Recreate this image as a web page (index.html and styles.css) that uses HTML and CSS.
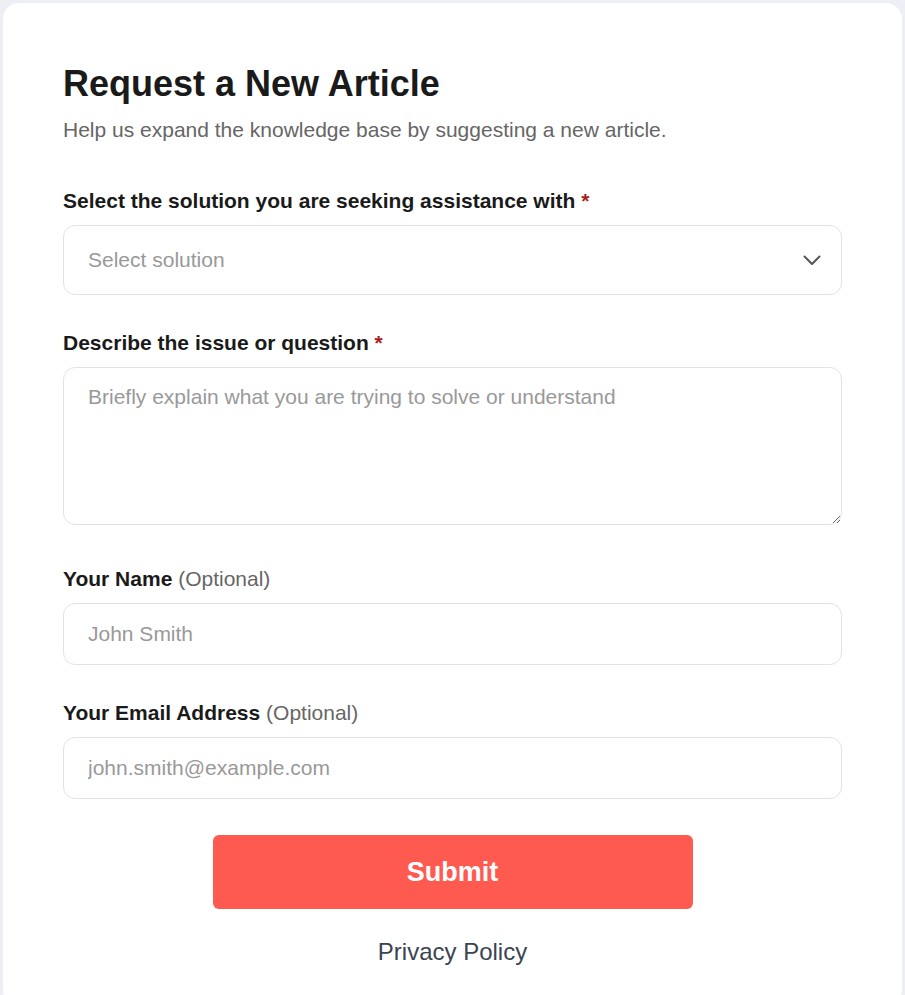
FILE: index.html
```html
<!DOCTYPE html>
<html lang="en">
<head>
<meta charset="utf-8">
<title>Request a New Article</title>
<link rel="stylesheet" href="styles.css">
</head>
<body>
<main class="card">
  <h1 class="title">Request a New Article</h1>
  <p class="subtitle">Help us expand the knowledge base by suggesting a new article.</p>
  <form class="form">
    <div class="field">
      <label class="label">Select the solution you are seeking assistance with <span class="req">*</span></label>
      <div class="select">
        <span class="select-text">Select solution</span>
        <svg class="chevron" width="18" height="11" viewBox="0 0 18 11"><path d="M1.5 1.5 L9 9 L16.5 1.5" fill="none" stroke="#555" stroke-width="2" stroke-linecap="round" stroke-linejoin="round"/></svg>
      </div>
    </div>
    <div class="field field-area">
      <label class="label">Describe the issue or question <span class="req">*</span></label>
      <textarea class="textarea" placeholder="Briefly explain what you are trying to solve or understand"></textarea>
    </div>
    <div class="field">
      <label class="label">Your Name <span class="opt">(Optional)</span></label>
      <input class="input" type="text" placeholder="John Smith">
    </div>
    <div class="field">
      <label class="label">Your Email Address <span class="opt">(Optional)</span></label>
      <input class="input" type="email" placeholder="john.smith@example.com">
    </div>
    <div class="actions">
      <button class="submit" type="button">Submit</button>
      <a class="privacy" href="#">Privacy Policy</a>
    </div>
  </form>
</main>
</body>
</html>
```
FILE: styles.css
```css
html, body {
  margin: 0;
  background: #eeeff4;
}
body {
  padding: 3px 3px 0 3px;
  font-family: "Liberation Sans", Arial, sans-serif;
}
.card {
  background: #ffffff;
  border-radius: 16px;
  padding: 60px 60px 40px 60px;
  min-height: 980px;
  box-sizing: border-box;
}
.title {
  margin: 0 0 13px 0;
  font-size: 36px;
  font-weight: 700;
  color: #1a1a1a;
  line-height: normal;
}
.subtitle {
  margin: 0 0 47px 0;
  font-size: 21px;
  color: #666666;
  line-height: normal;
}
.form {
  display: flex;
  flex-direction: column;
}
.field {
  display: flex;
  flex-direction: column;
  margin-bottom: 36px;
}
.field-area {
  margin-bottom: 42px;
}
.label {
  font-size: 21px;
  font-weight: 700;
  color: #1a1a1a;
  margin-bottom: 12px;
  line-height: normal;
}
.req {
  color: #a81c1c;
}
.opt {
  font-weight: 400;
  color: #666666;
}
.select {
  height: 70px;
  box-sizing: border-box;
  border: 1px solid #e3e3e6;
  border-radius: 12px;
  display: flex;
  align-items: center;
  justify-content: space-between;
  padding: 0 20px 0 24px;
}
.select-text {
  font-size: 21px;
  color: #999999;
}
.chevron {
  display: block;
}
.textarea {
  display: block;
  height: 158px;
  box-sizing: border-box;
  border: 1px solid #e3e3e6;
  border-radius: 12px;
  padding: 17px 24px;
  font-family: "Liberation Sans", Arial, sans-serif;
  font-size: 21px;
  color: #333;
  resize: vertical;
  outline: none;
}
.textarea::placeholder,
.input::placeholder {
  color: #999999;
  opacity: 1;
}
.input {
  display: block;
  height: 62px;
  box-sizing: border-box;
  border: 1px solid #e3e3e6;
  border-radius: 12px;
  padding: 0 24px;
  font-family: "Liberation Sans", Arial, sans-serif;
  font-size: 21px;
  color: #333;
  outline: none;
}
.actions {
  display: flex;
  flex-direction: column;
  align-items: center;
  gap: 29px;
}
.submit {
  width: 480px;
  height: 74px;
  border: none;
  border-radius: 6px;
  background: #ff5a4f;
  color: #ffffff;
  font-family: "Liberation Sans", Arial, sans-serif;
  font-size: 27px;
  font-weight: 700;
  cursor: pointer;
}
.privacy {
  font-size: 24px;
  color: #3b4452;
  text-decoration: none;
}
```
